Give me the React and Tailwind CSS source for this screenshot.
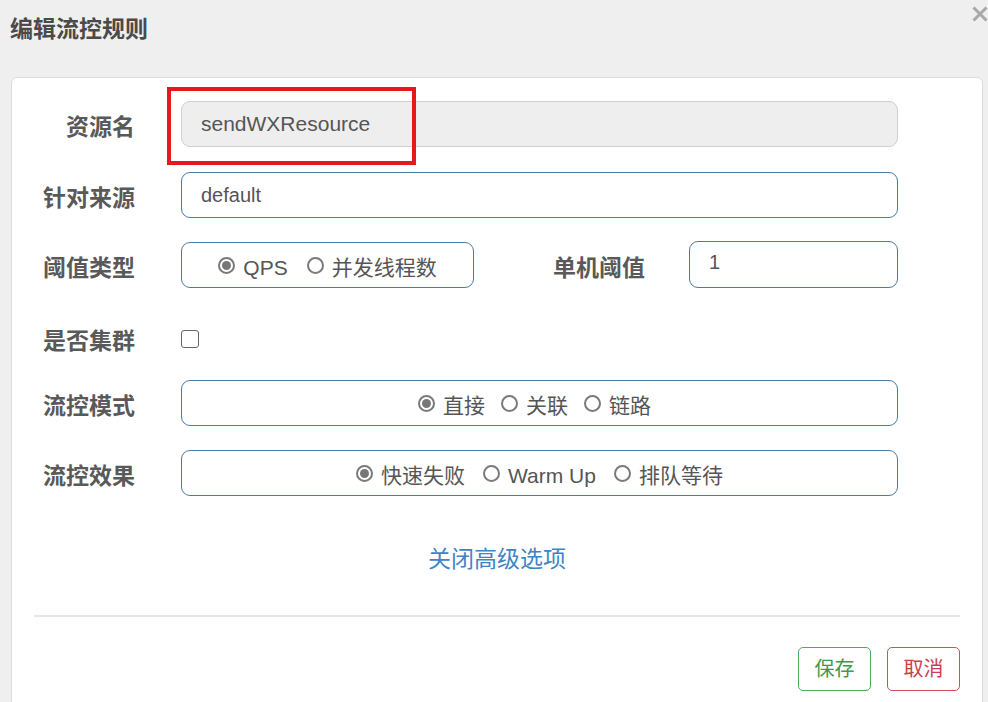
import React from "react";

const FONT = { fontFamily: '"Liberation Sans", "Noto Sans CJK SC", sans-serif' };

function Radio({ checked, label }) {
  return (
    <span className="flex items-center">
      <span className="w-[17px] h-[17px] rounded-full border-[2px] border-[#7a7a7a] flex items-center justify-center bg-white">
        {checked && <span className="w-[9px] h-[9px] rounded-full bg-[#777]" />}
      </span>
      <span className="ml-[8px] text-[21px] text-[#555] leading-none pt-[5px]">{label}</span>
    </span>
  );
}

function Label({ children, w = "w-[123px]" }) {
  return (
    <div className={`${w} shrink-0 text-right text-[23px] font-bold text-[#595959] pt-[6px]`}>{children}</div>
  );
}

export default function App() {
  return (
    <div className="w-[988px] h-[702px] bg-[#efefef] overflow-hidden relative" style={FONT}>
      <div className="h-[77px] pl-[10px] pt-[12px]">
        <div className="text-[23px] font-bold text-[#4a4a4a] leading-[34px]">编辑流控规则</div>
      </div>
      <svg className="absolute left-[972px] top-[6px]" width="16" height="16" viewBox="0 0 16 16">
        <path d="M1.5 1.5 L14.5 14.5 M14.5 1.5 L1.5 14.5" stroke="#a8a8a8" strokeWidth="3" />
      </svg>
      <div className="ml-[11px] w-[972px] h-[640px] bg-white border border-[#dcdcdc] rounded-t-[6px] pt-[23px]">
        {/* row 1 */}
        <div className="flex items-center h-[46px] relative">
          <Label>资源名</Label>
          <div className="ml-[46px] w-[717px] h-[46px] rounded-[9px] bg-[#eeeeee] border border-[#cfcfcf] flex items-center pl-[19px] text-[21px] text-[#555]">
            sendWXResource
          </div>
          <div className="absolute left-[155px] top-[-14px] w-[249px] h-[78px] border-[4px] border-[#e5191c]" />
        </div>
        {/* row 2 */}
        <div className="flex items-center h-[46px] mt-[25px]">
          <Label>针对来源</Label>
          <div className="ml-[46px] w-[717px] h-[46px] rounded-[9px] border border-[#4b7ba3] flex items-center pl-[19px] text-[20px] text-[#555]">
            default
          </div>
        </div>
        {/* row 3 */}
        <div className="flex items-center h-[46px] mt-[24px]">
          <Label>阈值类型</Label>
          <div className="ml-[46px] w-[293px] h-[46px] rounded-[9px] border border-[#4b7ba3] flex items-center justify-center gap-[19px]">
            <Radio checked label="QPS" />
            <Radio label="并发线程数" />
          </div>
          <Label w="w-[171px]">单机阈值</Label>
          <div className="ml-[44px] w-[209px] h-[47px] -mt-[2px] rounded-[9px] border border-[#4b7ba3] flex items-center pl-[19px] text-[20px] text-[#555] pb-[4px]">
            1
          </div>
        </div>
        {/* row 4 */}
        <div className="flex items-center h-[46px] mt-[24px] pt-[6px]">
          <Label>是否集群</Label>
          <div className="ml-[46px] w-[18px] h-[18px] rounded-[3px] border-[1.5px] border-[#666] mt-[2px]" />
        </div>
        {/* row 5 */}
        <div className="flex items-center h-[46px] mt-[22px]">
          <Label>流控模式</Label>
          <div className="ml-[46px] w-[717px] h-[46px] rounded-[9px] border border-[#4b7ba3] flex items-center justify-center gap-[16px] pr-[10px]">
            <Radio checked label="直接" />
            <Radio label="关联" />
            <Radio label="链路" />
          </div>
        </div>
        {/* row 6 */}
        <div className="flex items-center h-[46px] mt-[24px]">
          <Label>流控效果</Label>
          <div className="ml-[46px] w-[717px] h-[46px] rounded-[9px] border border-[#4b7ba3] flex items-center justify-center gap-[18px]">
            <Radio checked label="快速失败" />
            <Radio label="Warm Up" />
            <Radio label="排队等待" />
          </div>
        </div>
        {/* link */}
        <div className="mt-[48px] h-[30px] flex justify-center items-center">
          <span className="text-[23px] text-[#3f84c3] leading-[30px]">关闭高级选项</span>
        </div>
        <div className="mx-[22px] mt-[41px] h-[2px] bg-[#e5e5e5]" />
        <div className="mx-[22px] mt-[30px] flex justify-end gap-[16px]">
          <div className="w-[73px] h-[44px] rounded-[5px] border border-[#4cae5c] text-[#3d9b4b] text-[20px] flex items-center justify-center">
            保存
          </div>
          <div className="w-[73px] h-[44px] rounded-[5px] border border-[#d0505a] text-[#c9404a] text-[20px] flex items-center justify-center">
            取消
          </div>
        </div>
      </div>
    </div>
  );
}
